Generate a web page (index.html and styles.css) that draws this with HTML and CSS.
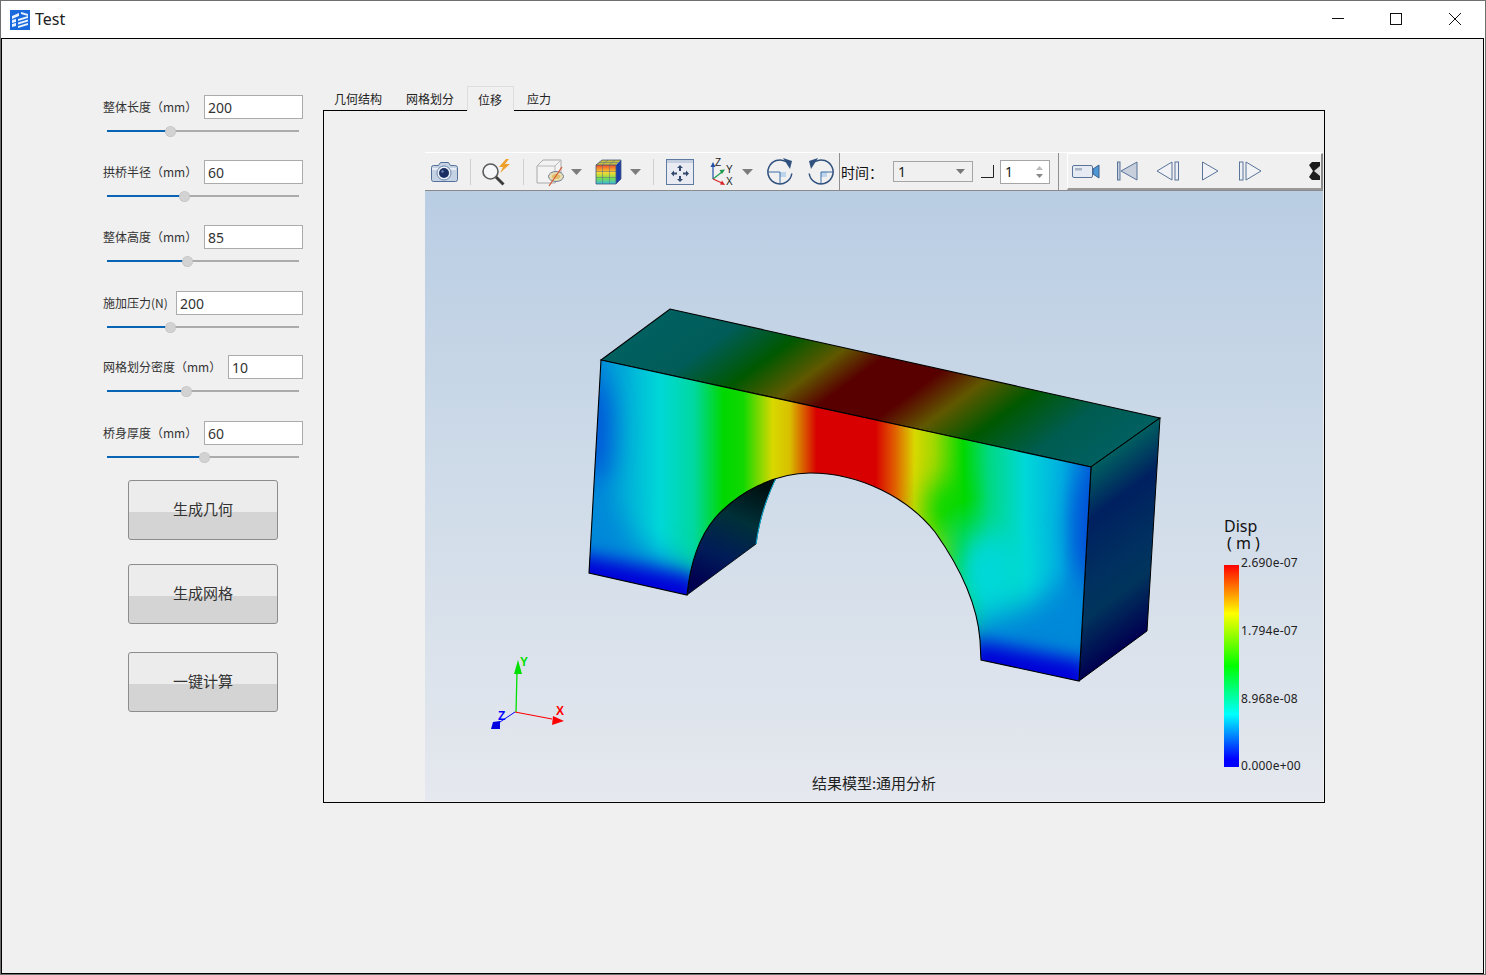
FILE: index.html
```html
<!DOCTYPE html>
<html lang="zh-CN">
<head>
<meta charset="utf-8">
<title>Test</title>
<link rel="stylesheet" href="styles.css">
</head>
<body>
<div class="window">
  <header class="titlebar">
    <svg class="logo" viewBox="0 0 20 20"><rect width="20" height="20" fill="#1769dd"/><path d="M2 6 9 3v3L2 9zM11 2l7 2v2l-7-2zM2 10l4-1v3l-4 1zM2 14l4-1v3l-4 1zM8 9l10-3v2L8 11zM8 12.500l10-3v2l-10 3zM8 16l10-3v2L8 18z" fill="#e8f1fd"/></svg>
    <span class="title-text">Test</span>
    <div class="caption">
      <svg class="cap-btn" viewBox="1 1 58.500 37"><path d="M23 18.500h12" stroke="#111" fill="none"/></svg>
      <svg class="cap-btn" viewBox="1 1 58.500 37"><rect x="23.500" y="13.500" width="11" height="11" stroke="#111" fill="none"/></svg>
      <svg class="cap-btn" viewBox="1 1 58.500 37"><path d="M23 13l12 12M35 13 23 25" stroke="#111" fill="none"/></svg>
    </div>
  </header>
  <main class="client">
    <aside class="sidebar">
      <div class="field">
        <div class="field-row"><label class="field-label">整体长度（mm）</label><input class="field-input" value="200"></div>
        <div class="slider"><i class="fill" style="width:63px"></i><b class="knob"></b><i class="rest"></i></div>
      </div>
      <div class="field">
        <div class="field-row"><label class="field-label">拱桥半径（mm）</label><input class="field-input" value="60"></div>
        <div class="slider"><i class="fill" style="width:77px"></i><b class="knob"></b><i class="rest"></i></div>
      </div>
      <div class="field field-tall">
        <div class="field-row"><label class="field-label">整体高度（mm）</label><input class="field-input" value="85"></div>
        <div class="slider"><i class="fill" style="width:80px"></i><b class="knob"></b><i class="rest"></i></div>
      </div>
      <div class="field field-short">
        <div class="field-row"><label class="field-label">施加压力(N)</label><input class="field-input" value="200"></div>
        <div class="slider"><i class="fill" style="width:63px"></i><b class="knob"></b><i class="rest"></i></div>
      </div>
      <div class="field field-tall">
        <div class="field-row"><label class="field-label">网格划分密度（mm）</label><input class="field-input input-small" value="10"></div>
        <div class="slider"><i class="fill" style="width:79px"></i><b class="knob"></b><i class="rest"></i></div>
      </div>
      <div class="field field-last">
        <div class="field-row"><label class="field-label">桥身厚度（mm）</label><input class="field-input" value="60"></div>
        <div class="slider"><i class="fill" style="width:97px"></i><b class="knob"></b><i class="rest"></i></div>
      </div>
      <button class="action"><span class="action-text">生成几何</span></button>
      <button class="action action-2"><span class="action-text">生成网格</span></button>
      <button class="action action-3"><span class="action-text">一键计算</span></button>
    </aside>
    <section class="workspace">
      <nav class="tabs">
        <span class="tab">几何结构</span>
        <span class="tab">网格划分</span>
        <span class="tab tab-active">位移</span>
        <span class="tab">应力</span>
      </nav>
      <div class="panel">
        <div class="viewer">
          <div class="toolbar">
            <svg class="ic i-camera" viewBox="0 0 30 24"><path d="M2.500 7.500q0-2 2-2h5l2-3h8l2 3h4q3 0 3 2v12q0 2-2 2h-22q-2 0-2-2z" fill="#c4d2e4" stroke="#54709a"/><path d="M3 8h24v2H3z" fill="#e8eef6"/><circle cx="15" cy="13" r="7" fill="#eef3f9" stroke="#6d88ae"/><circle cx="15" cy="13" r="5" fill="#1c2f62"/><circle cx="13.500" cy="11.500" r="1.200" fill="#6d88ae"/></svg>
            <span class="sep s1"></span>
            <svg class="ic i-mag" viewBox="0 0 32 28"><circle cx="9.500" cy="13.500" r="7.500" fill="#f4f6f8" stroke="#5b5b5b" stroke-width="1.600"/><path d="M15 19 22.500 26.500" stroke="#3c3c3c" stroke-width="3"/><path d="M25 1l-7 8h4l-3 6 10-9h-5l4-5z" fill="#eda02b"/></svg>
            <span class="sep s2"></span>
            <svg class="ic i-cube" viewBox="0 0 32 30"><path d="M2 9l6-6h18v17l-6 6H2z" fill="#f3f3f3" stroke="#a9a9a9"/><path d="M2 9h18v17M20 9l6-6" fill="none" stroke="#b9b9b9"/><ellipse cx="21" cy="19.500" rx="7.500" ry="5" fill="#e9dcae" stroke="#6f7f99"/><ellipse cx="21" cy="19.500" rx="4" ry="2.500" fill="#dfbd6d"/><path d="M14 29 27 10" stroke="#d8542d" stroke-width="1.200"/></svg>
            <svg class="ic i-arrow a1" viewBox="0 0 11 6"><path d="M0 0h11L5.500 6z" fill="#7d7d7d"/></svg>
            <svg class="ic i-grid" viewBox="0 0 30 28"><defs><linearGradient id="rb" x1="0" y1="0" x2="0" y2="1"><stop offset="0" stop-color="#f04a2a"/><stop offset=".4" stop-color="#f8da30"/><stop offset=".7" stop-color="#78e050"/><stop offset="1" stop-color="#38b8e0"/></linearGradient></defs><path d="M2 7l6-5h19l-5 5z" fill="#c8c040"/><path d="M22 7l5-5v19l-5 5z" fill="#1a3ea8"/><rect x="2" y="7" width="20" height="19" fill="url(#rb)"/><path d="M8.500 7v19M15.500 7v19M2 13.500h20M2 19.500h20M8 7l6-5M15 7l6-5M5 4.500h19" stroke="#56688a" stroke-width=".5" fill="none"/><path d="M2 7l6-5h19v19l-5 5H2zM22 7v19M2 7h20" fill="none" stroke="#46587c" stroke-width=".8"/></svg>
            <svg class="ic i-arrow a2" viewBox="0 0 11 6"><path d="M0 0h11L5.500 6z" fill="#7d7d7d"/></svg>
            <span class="sep s3"></span>
            <svg class="ic i-fit" viewBox="0 0 30 28"><rect x="1.500" y="1.500" width="27" height="25" fill="#e8ecf2" stroke="#5f7aa0"/><path d="M2 2h26v3H2z" fill="#c4d0e0"/><path d="M15 7l3 3h-2v3h-2v-3h-2zM15 24l3-3h-2v-3h-2v3h-2zM6 15.500l3-3v2h3v2H9v2zM24 15.500l-3-3v2h-3v2h3v2z" fill="#34486e"/></svg>
            <svg class="ic i-axes" viewBox="0 0 28 30"><path d="M4 22V9" stroke="#2350a8" stroke-width="1.200"/><path d="M4 5l-2.500 5h5z" fill="#2350a8"/><path d="M4 22l9-7" stroke="#1f9a4e" stroke-width="1.200"/><path d="M16 12.500l-5.500 .5 2.500 4z" fill="#1f9a4e"/><path d="M4 22l9 4" stroke="#d8262c" stroke-width="1.200"/><path d="M16 28l-5-.5 2-4z" fill="#d8262c"/><text x="6" y="9" class="axis-mini">Z</text><text x="17" y="16" class="axis-mini">Y</text><text x="17" y="28" class="axis-mini">X</text></svg>
            <svg class="ic i-arrow a3" viewBox="0 0 11 6"><path d="M0 0h11L5.500 6z" fill="#7d7d7d"/></svg>
            <svg class="ic i-rot1" viewBox="0 0 28 28"><rect x="14" y="14" width="6" height="5" fill="#bcd4ec"/><path d="M2 14h12v12" fill="none" stroke="#3a6ea8"/><path d="M25.800 15.500A12 12 0 1 1 20 3.600" fill="none" stroke="#30507e" stroke-width="1.500"/><path d="M17 0l9 3-2 8z" fill="#30507e"/></svg>
            <svg class="ic i-rot2" viewBox="0 0 28 28"><rect x="14" y="14" width="6" height="5" fill="#bcd4ec"/><path d="M14 26V14h12" fill="none" stroke="#3a6ea8"/><path d="M2.200 15.500A12 12 0 1 0 8 3.600" fill="none" stroke="#30507e" stroke-width="1.500"/><path d="M11 0 2 3l2 8z" fill="#30507e"/></svg>
            <span class="vsep v1"></span>
            <span class="time-label">时间：</span>
            <div class="combo"><span>1</span><svg class="combo-arrow" viewBox="0 0 9 5"><path d="M0 0h9L4.500 5z" fill="#777"/></svg></div>
            <svg class="ic i-corner" viewBox="0 0 13 13"><path d="M0 12.500h12.500V0" fill="none" stroke="#222"/></svg>
            <div class="spin"><span>1</span><svg class="spin-arrows" viewBox="0 0 7 12"><path d="M3.500 0 7 4H0z" fill="#bbb"/><path d="M3.500 12 7 8H0z" fill="#888"/></svg></div>
            <span class="vsep v2"></span>
            <div class="toolbar2">
              <svg class="ic i-video" viewBox="0 0 30 18"><rect x="1.500" y="3.500" width="20" height="12" rx="1.500" fill="#e6ebf3" stroke="#5a7399"/><rect x="4" y="6" width="7" height="2.500" fill="#a9b4c4"/><path d="M22 7l6-4v13l-6-4z" fill="#4d97d4" stroke="#3d5f8e"/></svg>
              <svg class="ic i-first" viewBox="0 0 22 20"><rect x="1.500" y="1" width="2.500" height="18" fill="#c6d1e0" stroke="#5a7399"/><path d="M21 1v18L5 10z" fill="#c6cfdb" stroke="#5a7399"/></svg>
              <svg class="ic i-prev" viewBox="0 0 24 20"><path d="M16 1v18L1 10z" fill="#f0f2f5" stroke="#5a7399"/><rect x="19" y="1" width="3.500" height="18" fill="#eef1f5" stroke="#5a7399"/></svg>
              <svg class="ic i-play" viewBox="0 0 18 20"><path d="M1.500 1v18L17 10z" fill="#f0f2f5" stroke="#5a7399"/></svg>
              <svg class="ic i-next" viewBox="0 0 24 20"><rect x="1.500" y="1" width="3.500" height="18" fill="#eef1f5" stroke="#5a7399"/><path d="M8 1v18l15-9z" fill="#f0f2f5" stroke="#5a7399"/></svg>
              <svg class="ic i-handle" viewBox="0 0 11 18"><path d="M0 3 3 0h8v18H3L0 15l4-6z" fill="#1c1c1c"/><path d="M5 9l6-5v10z" fill="#dcdcdc"/></svg>
            </div>
          </div>
          <svg class="scene" viewBox="425 191 898 610">
            <defs>
              <linearGradient id="bg" x1="0" y1="0" x2="0" y2="1"><stop offset="0" stop-color="#b9cde3"/><stop offset=".5" stop-color="#d0dce9"/><stop offset="1" stop-color="#e5e8ee"/></linearGradient>
              <linearGradient id="frontGrad" gradientUnits="userSpaceOnUse" x1="601" y1="0" x2="1091" y2="0">
                <stop offset="0" stop-color="#0090d8"/><stop offset=".12" stop-color="#00d8d8"/><stop offset=".19" stop-color="#00d8a0"/><stop offset=".25" stop-color="#00d800"/><stop offset=".29" stop-color="#10d800"/><stop offset=".35" stop-color="#d8d800"/><stop offset=".385" stop-color="#d8c000"/><stop offset=".44" stop-color="#d80000"/><stop offset=".56" stop-color="#d80000"/><stop offset=".6" stop-color="#e06000"/><stop offset=".64" stop-color="#d8d800"/><stop offset=".68" stop-color="#a0d800"/><stop offset=".74" stop-color="#00d800"/><stop offset=".79" stop-color="#00d880"/><stop offset=".865" stop-color="#00d8d8"/><stop offset=".94" stop-color="#00b0e0"/><stop offset="1" stop-color="#0060d8"/>
              </linearGradient>
              <linearGradient id="topGrad" gradientUnits="userSpaceOnUse" x1="601" y1="360" x2="825" y2="663">
                <stop offset="0" stop-color="#006060"/><stop offset=".14" stop-color="#005c58"/><stop offset=".26" stop-color="#005800"/><stop offset=".36" stop-color="#605800"/><stop offset=".44" stop-color="#580000"/><stop offset=".56" stop-color="#580000"/><stop offset=".65" stop-color="#605800"/><stop offset=".75" stop-color="#005800"/><stop offset=".88" stop-color="#005c50"/><stop offset="1" stop-color="#006060"/>
              </linearGradient>
              <linearGradient id="sideGrad" gradientUnits="userSpaceOnUse" x1="1091" y1="467" x2="1189" y2="600">
                <stop offset="0" stop-color="#006060"/><stop offset=".25" stop-color="#002060"/><stop offset=".55" stop-color="#003060"/><stop offset=".72" stop-color="#00345c"/><stop offset="1" stop-color="#000050"/>
              </linearGradient>
              <linearGradient id="innerGrad" gradientUnits="userSpaceOnUse" x1="760" y1="485" x2="715" y2="590">
                <stop offset="0" stop-color="#001010"/><stop offset=".35" stop-color="#003038"/><stop offset=".7" stop-color="#001c58"/><stop offset="1" stop-color="#000050"/>
              </linearGradient>
              <linearGradient id="legendGrad" x1="0" y1="0" x2="0" y2="1">
                <stop offset="0" stop-color="#ff0000"/><stop offset=".24" stop-color="#ffff00"/><stop offset=".5" stop-color="#00ff00"/><stop offset=".74" stop-color="#00ffff"/><stop offset=".96" stop-color="#0000ff"/><stop offset="1" stop-color="#0000ff"/>
              </linearGradient>
              <clipPath id="frontClip"><path d="M601 360 1091 467 1079 681 981 660 980 640C977 600 957 563 935 532 908 498 860 473 810 473 775 473 738 492 715 518 699 537 690 565 687 595L589 573Z"/></clipPath>
              <filter id="b14" x="-50%" y="-50%" width="200%" height="200%"><feGaussianBlur stdDeviation="14"/></filter>
              <filter id="b9" x="-50%" y="-50%" width="200%" height="200%"><feGaussianBlur stdDeviation="9"/></filter>
            </defs>
            <rect x="425" y="191" width="898" height="610" fill="url(#bg)"/>
            <path d="M687 595C690 565 699 537 715 518 730 502 752 486 776 478 768 495 760 515 756 544Z" fill="url(#innerGrad)" stroke="#000" stroke-width=".8"/>
            <path d="M776 478C768 495 760 515 756 544" fill="none" stroke="#00b0d8"/>
            <path d="M601 360 670 309 1160 418 1091 467Z" fill="url(#topGrad)" stroke="#000" stroke-width="1.100"/>
            <path d="M1091 467 1160 418 1147 631 1079 681Z" fill="url(#sideGrad)" stroke="#000" stroke-width="1"/>
            <g clip-path="url(#frontClip)">
              <rect x="580" y="350" width="520" height="340" fill="url(#frontGrad)"/>
              <g filter="url(#b14)">
                <ellipse cx="948" cy="510" rx="22" ry="30" fill="#00d800"/>
                <ellipse cx="990" cy="575" rx="36" ry="45" fill="#00d8d8"/>
                <path d="M575 480 600 495 635 545 700 575 700 610 575 590Z" fill="#0088d8"/>
                <path d="M965 622 1040 600 1095 560 1095 700 965 680Z" fill="#0088d8"/>
                <ellipse cx="594" cy="430" rx="16" ry="55" fill="#0050d8"/>
                <ellipse cx="1092" cy="530" rx="18" ry="55" fill="#0050d8"/>
              </g>
              <g filter="url(#b9)">
                <path d="M570 552 700 578 700 620 570 600Z" fill="#0000d8"/>
                <path d="M970 640 1090 662 1090 700 970 680Z" fill="#0000d8"/>
              </g>
            </g>
            <path d="M601 360 1091 467 1079 681 981 660 980 640C977 600 957 563 935 532 908 498 860 473 810 473 775 473 738 492 715 518 699 537 690 565 687 595L589 573Z" fill="none" stroke="#000" stroke-width="1.100"/>
            <path d="M516 712 517 672" stroke="#00e000" stroke-width="1.300"/>
            <path d="M518 660 522 674 514 674Z" fill="#00e000"/>
            <path d="M515 712 552 719" stroke="#ff0000" stroke-width="1.100"/>
            <path d="M564 721 552 725 553 716Z" fill="#ff0000"/>
            <path d="M515 712 497 724" stroke="#0000ff" stroke-width="1"/>
            <path d="M491 729 493 722 500 721 500 729Z" fill="#0000e0"/>
            <text x="520" y="666" class="axis-label axis-y">Y</text>
            <text x="556" y="715" class="axis-label axis-x">X</text>
            <text x="498" y="720" class="axis-label axis-z">Z</text>
            <text x="1224" y="532" class="legend-title">Disp</text>
            <text x="1227" y="549" class="legend-title">( m )</text>
            <rect x="1224" y="565" width="15" height="202" fill="url(#legendGrad)"/>
            <text x="1241" y="567" class="legend-label">2.690e-07</text>
            <text x="1241" y="635" class="legend-label">1.794e-07</text>
            <text x="1241" y="703" class="legend-label">8.968e-08</text>
            <text x="1241" y="770" class="legend-label">0.000e+00</text>
            <text x="874" y="789" class="scene-caption">结果模型:通用分析</text>
          </svg>
        </div>
      </div>
    </section>
  </main>
</div>
</body>
</html>
```
FILE: styles.css
```css
* { box-sizing: border-box; }
html, body { margin: 0; padding: 0; }
body { width: 1486px; height: 975px; overflow: hidden; background: #fff; font-family: "Noto Sans CJK SC", "Noto Sans", sans-serif; color: #222; }
.window { width: 1486px; height: 975px; display: flex; flex-direction: column; border: 1px solid #6f6f6f; background: #fff; }
.titlebar { height: 37px; display: flex; align-items: center; background: #fff; flex: none; }
.logo { width: 20px; height: 20px; margin-left: 9px; }
.title-text { margin: 0 0 2px 5px; font: 16px "Noto Sans", sans-serif; color: #222; }
.caption { margin-left: auto; display: flex; height: 37px; }
.cap-btn { width: 58.500px; height: 37px; }
.client { flex: 1; display: flex; border: 1px solid #000; margin-right: 1px; background: #f0f0f0; }
.sidebar { width: 201px; margin-left: 100px; padding-top: 56px; flex: none; display: flex; flex-direction: column; }
.field { height: 65px; flex: none; }
.field-tall { height: 66px; }
.field-short { height: 64px; }
.field-last { height: 59px; }
.field-row { display: flex; align-items: center; justify-content: space-between; height: 24px; }
.field-label { font-size: 12px; color: #333; white-space: nowrap; line-height: 24px; margin-left: 1px; }
.field-input { width: 99px; height: 24px; border: 1px solid #ababab; background: #fff; padding: 0 3px; font: 14px "Noto Sans", sans-serif; color: #333; outline: none; border-radius: 0; }
.field-short .field-input { width: 127px; }
.field-tall .input-small { width: 75px; }
.slider { display: flex; align-items: center; height: 16px; width: 192px; margin: 4px 0 0 5px; }
.fill { height: 2.500px; background: #0a64b4; display: block; flex: none; }
.rest { height: 2.500px; background: #ababab; display: block; flex: 1; }
.knob { width: 11px; height: 11px; margin: 0 -5.500px; border-radius: 50%; background: #d2d2d2; border: 1px dotted #bbb; flex: none; position: relative; }
.action { width: 150px; height: 60px; flex: none; margin-left: 26px; border: 1px solid #8c8c8c; border-radius: 3px; background: linear-gradient(#ececec 0, #ececec 53%, #d4d4d4 53%, #d4d4d4 100%); font: 15px "Noto Sans CJK SC", sans-serif; color: #333; padding: 0 0 2px; }
.action-text { display: block; line-height: 20px; }
.action-2 { margin-top: 24px; }
.action-3 { margin-top: 28px; }
.workspace { margin-left: 20px; padding-top: 47px; width: 1002px; flex: none; display: flex; flex-direction: column; }
.tabs { display: flex; gap: 2px; height: 24px; flex: none; position: relative; z-index: 1; }
.tab { height: 25px; padding: 2px 11px 0; font-size: 12px; line-height: 22px; color: #222; }
.tab-active { border: 1px solid #dedede; border-bottom: 0; padding-left: 10px; padding-right: 11px; background: #f0f0f0; }
.panel { height: 693px; border: 1px solid #000; background: #f0f0f0; padding: 41px 1px 1px 101px; flex: none; }
.viewer { width: 898px; height: 650px; display: flex; flex-direction: column; }
.toolbar { height: 39px; flex: none; display: flex; align-items: center; background: #f0f0f0; border-top: 1px solid #fff; border-bottom: 1px solid #8a8a8a; }
.ic { flex: none; display: block; }
.sep { width: 1px; height: 26px; background: #cfcfcf; flex: none; }
.vsep { width: 1px; height: 37px; background: #8f8f8f; flex: none; }
.i-camera { width: 30px; height: 24px; margin-left: 4px; }
.s1 { margin-left: 11px; }
.i-mag { width: 32px; height: 28px; margin-left: 10px; }
.s2 { margin-left: 10px; }
.i-cube { width: 32px; height: 30px; margin-left: 11px; }
.i-arrow { width: 11px; height: 6px; }
.a1 { margin-left: 4px; }
.i-grid { width: 30px; height: 28px; margin-left: 12px; }
.a2 { margin-left: 6px; }
.s3 { margin-left: 12px; }
.i-fit { width: 30px; height: 28px; margin-left: 11px; }
.i-axes { width: 28px; height: 30px; margin-left: 14px; }
.a3 { margin-left: 5px; }
.i-rot1 { width: 28px; height: 28px; margin-left: 13px; }
.i-rot2 { width: 28px; height: 28px; margin-left: 13px; }
.v1 { margin-left: 4px; }
.time-label { margin-left: 1px; font: 14px "Noto Sans CJK TC", "Noto Sans CJK SC", sans-serif; color: #111; white-space: nowrap; }
.combo { margin-left: 10px; width: 80px; height: 21px; border: 1px solid #a5a5a5; display: flex; align-items: center; justify-content: space-between; padding: 0 7px 0 4px; font: 14px "Noto Sans", sans-serif; color: #222; background: #f0f0f0; }
.combo-arrow { width: 9px; height: 5px; }
.i-corner { width: 13px; height: 13px; margin-left: 8px; }
.spin { margin-left: 6px; width: 50px; height: 24px; border: 1px solid #a5a5a5; background: #fff; display: flex; align-items: center; justify-content: space-between; padding: 0 6px 0 4px; font: 14px "Noto Sans", sans-serif; color: #222; }
.spin-arrows { width: 7px; height: 12px; }
.v2 { margin-left: 8px; }
.toolbar2 { margin-left: 8px; flex: none; width: 256px; height: 37px; display: flex; align-items: center; background: #f0f0f0; border-left: 1px solid #fff; border-top: 1px solid #fff; border-right: 2px solid #8a8a8a; border-bottom: 2px solid #9a9a9a; }
.i-video { width: 30px; height: 18px; margin-left: 3px; }
.i-first { width: 22px; height: 20px; margin-left: 15px; }
.i-prev { width: 24px; height: 20px; margin-left: 18px; }
.i-play { width: 18px; height: 20px; margin-left: 21px; }
.i-next { width: 24px; height: 20px; margin-left: 19px; }
.i-handle { width: 11px; height: 18px; margin-left: 47px; }
.axis-mini { font: 10px "Liberation Sans", sans-serif; fill: #222; }
.scene { width: 898px; height: 610px; display: block; flex: none; }
.axis-label { font: bold 12px "Liberation Sans", sans-serif; }
.axis-y { fill: #00e000; }
.axis-x { fill: #ff0000; }
.axis-z { fill: #0000ff; }
.legend-title { font: 16px "Noto Sans", "Noto Sans CJK SC", sans-serif; fill: #111; }
.legend-label { font: 12px "Noto Sans", sans-serif; fill: #222; letter-spacing: .2px; }
.scene-caption { font: 15px "Noto Sans CJK SC", sans-serif; fill: #222; text-anchor: middle; }
```
